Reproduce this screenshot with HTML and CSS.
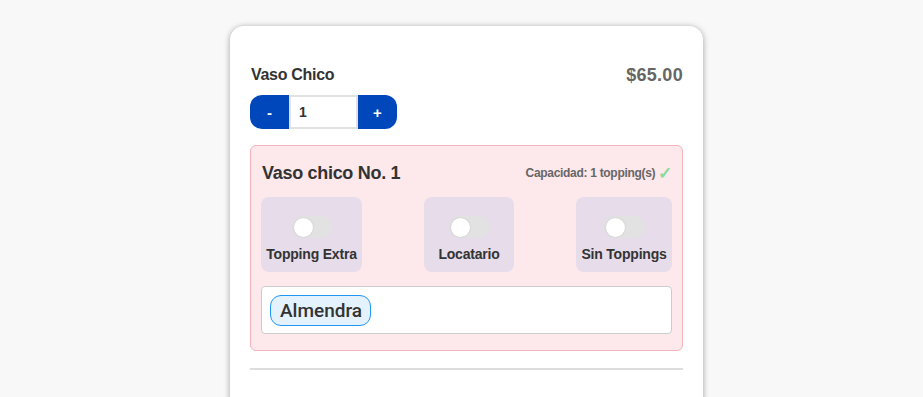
FILE: index.html
```html
<!DOCTYPE html>
<html lang="es">
<head>
<meta charset="utf-8">
<link rel="stylesheet" href="styles.css">
</head>
<body>
<div class="page">
  <div class="card">
    <div class="product-row">
      <span class="product-name">Vaso Chico</span>
      <span class="product-price">$65.00</span>
    </div>
    <div class="qty">
      <button class="qty-btn qty-minus">-</button>
      <input class="qty-input" type="text" value="1">
      <button class="qty-btn qty-plus">+</button>
    </div>
    <div class="cup">
      <div class="cup-head">
        <span class="cup-title">Vaso chico No. 1</span>
        <span class="cup-cap">Capacidad: 1 topping(s) <span class="check">✓</span></span>
      </div>
      <div class="options">
        <div class="option opt-1">
          <span class="switch"><span class="knob"></span></span>
          <span class="opt-label">Topping Extra</span>
        </div>
        <div class="option opt-2">
          <span class="switch"><span class="knob"></span></span>
          <span class="opt-label">Locatario</span>
        </div>
        <div class="option opt-3">
          <span class="switch"><span class="knob"></span></span>
          <span class="opt-label">Sin Toppings</span>
        </div>
      </div>
      <div class="toppings">
        <span class="chip">Almendra</span>
      </div>
    </div>
    <hr class="divider">
  </div>
</div>
</body>
</html>
```
FILE: styles.css
```css
html, body {
  margin: 0;
  padding: 0;
  background: #f8f8f8;
  font-family: "Liberation Sans", Arial, sans-serif;
  color: #333;
}
.page {
  display: flex;
  justify-content: center;
  padding: 26px 0 0 10px;
  height: 371px;
  overflow: hidden;
}
.card {
  width: 473px;
  box-sizing: border-box;
  background: #fff;
  border-radius: 14px;
  box-shadow: 0 1px 6px rgba(0,0,0,0.35);
  padding: 38px 20px 40px 20px;
  height: 420px;
}
.product-row {
  display: flex;
  justify-content: space-between;
  align-items: center;
  height: 22px;
  padding-left: 1px;
}
.product-name {
  font-size: 16px;
  font-weight: bold;
  letter-spacing: -0.3px;
  color: #333;
}
.product-price {
  font-size: 18px;
  font-weight: bold;
  color: #666;
  letter-spacing: 0.3px;
}
.qty {
  display: flex;
  margin-top: 9px;
  height: 34px;
}
.qty-btn {
  width: 39px;
  height: 34px;
  border: none;
  background: #0047bb;
  color: #fff;
  font-family: "Liberation Sans", Arial, sans-serif;
  font-weight: bold;
  font-size: 15px;
  padding: 0;
}
.qty-minus { border-radius: 12px 0 0 12px; }
.qty-plus { border-radius: 0 12px 12px 0; }
.qty-input {
  width: 69px;
  height: 34px;
  box-sizing: border-box;
  border: 2px solid #e2e2e2;
  padding: 0 0 0 8px;
  font-family: "Liberation Sans", Arial, sans-serif;
  font-size: 14px;
  font-weight: bold;
  color: #333;
  outline: none;
}
.cup {
  margin-top: 16px;
  background: #fde8eb;
  border: 1px solid #f3b2bc;
  border-radius: 6px;
  padding: 15px 10px 16px 10px;
}
.cup-head {
  display: flex;
  justify-content: space-between;
  align-items: center;
  height: 24px;
  padding-left: 1px;
}
.cup-title {
  font-size: 18px;
  font-weight: bold;
  letter-spacing: -0.3px;
  color: #333;
}
.cup-cap {
  font-size: 12px;
  font-weight: bold;
  color: #666;
  letter-spacing: -0.3px;
  display: flex;
  align-items: center;
  gap: 3px;
}
.check {
  color: #86dc9c;
  font-size: 17px;
  font-weight: bold;
  line-height: 1;
}
.options {
  display: flex;
  justify-content: space-between;
  margin-top: 12px;
}
.option {
  height: 75px;
  box-sizing: border-box;
  background: #e6dcea;
  border-radius: 8px;
  display: flex;
  flex-direction: column;
  align-items: center;
  padding-top: 19px;
}
.opt-1 { width: 101px; }
.opt-2 { width: 90px; }
.opt-3 { width: 96px; }
.switch {
  width: 40px;
  height: 22px;
  border-radius: 11px;
  background: #e2e2e2;
  display: flex;
  align-items: center;
  padding-left: 2px;
  box-sizing: border-box;
}
.knob {
  width: 19px;
  height: 19px;
  border-radius: 50%;
  background: #fff;
  box-shadow: 0 0 2px rgba(0,0,0,0.15);
}
.opt-label {
  margin-top: 8px;
  font-size: 14px;
  font-weight: bold;
  letter-spacing: -0.2px;
  color: #333;
}
.toppings {
  margin-top: 14px;
  height: 48px;
  box-sizing: border-box;
  background: #fff;
  border: 1px solid #ccc;
  border-radius: 4px;
  padding: 8px;
  display: flex;
  align-items: flex-start;
}
.chip {
  height: 31px;
  box-sizing: border-box;
  background: #e3f2fd;
  border: 1px solid #2196f3;
  border-radius: 11px;
  padding: 0 8px 0 9px;
  display: flex;
  align-items: center;
  font-family: Roboto, "Liberation Sans", sans-serif;
  font-size: 19px;
  font-weight: 500;
  color: #333;
}
.divider {
  margin: 17px 0 0 0;
  border: none;
  height: 2px;
  background: #ddd;
}
```
